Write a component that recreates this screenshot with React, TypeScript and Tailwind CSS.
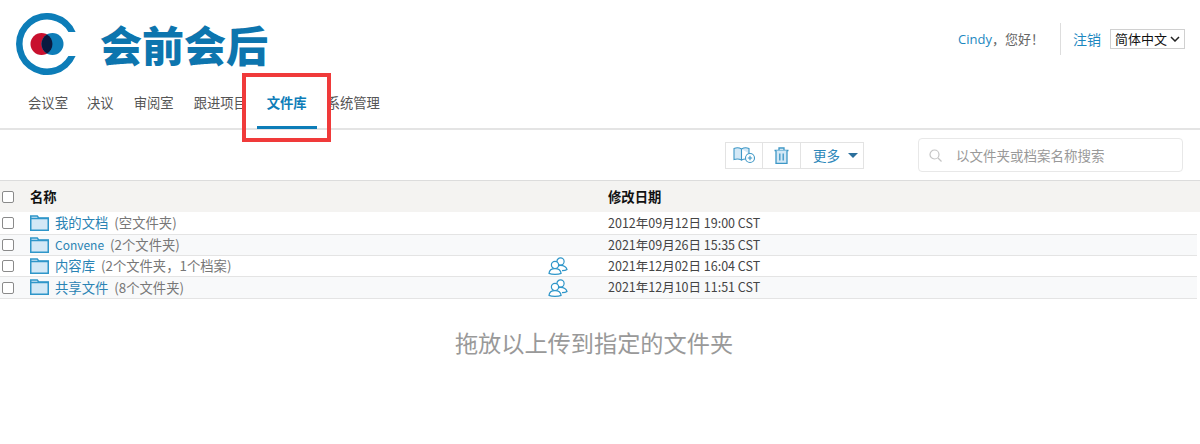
const fontStack = "font-['Noto_Sans_CJK_SC',sans-serif]";

const folders = [
  { name: "我的文档", nameSize: "text-[13.33px]", info: "(空文件夹)", date: "2012年09月12日 19:00 CST", shared: false, h: "h-[23px]" },
  { name: "Convene", nameSize: "text-[12px]", info: "(2个文件夹)", date: "2021年09月26日 15:35 CST", shared: false, h: "h-[21px]" },
  { name: "内容库", nameSize: "text-[13.33px]", info: "(2个文件夹，1个档案)", date: "2021年12月02日 16:04 CST", shared: true, h: "h-[21px]" },
  { name: "共享文件", nameSize: "text-[13.33px]", info: "(8个文件夹)", date: "2021年12月10日 11:51 CST", shared: true, h: "h-[22px]" },
];

function Logo() {
  return (
    <svg width="64" height="62" viewBox="0 0 64 62" className="shrink-0">
      <path d="M61.600 19A31 31 0 1 0 61.600 43H54.400A24.500 24.500 0 1 1 54.400 19z" fill="#0d7db8" />
      <circle cx="27.500" cy="31" r="11" fill="#c8102e" />
      <circle cx="38.500" cy="31" r="11" fill="#0d7db8" />
      <path d="M33 21.500a11 11 0 0 1 0 19a11 11 0 0 1 0-19z" fill="#0a1a3f" />
    </svg>
  );
}

function FolderIcon() {
  return (
    <svg width="19" height="16" viewBox="0 0 19 16" className="shrink-0">
      <path d="M.75 15.250V1h6.500l1.500 2h9.500v12.250z" fill="#d3e8f6" stroke="#2f96c9" strokeWidth="1.500" />
      <path d="M.75 3.500h18" stroke="#2f96c9" strokeWidth="1.500" />
    </svg>
  );
}

function SharedIcon() {
  return (
    <svg width="20" height="18" viewBox="0 0 20 18" fill="#fff" stroke="#2f96c9" strokeWidth="1.200">
      <circle cx="12.500" cy="4.500" r="3.600" />
      <path d="M8 12.500c.5-3 2.200-4.200 4.500-4.200s5.500 1 6.500 4.200c-1 .8-3 1.100-5 1.100" />
      <circle cx="7" cy="8" r="3.600" />
      <path d="M1 16.400c.3-3.200 3-4.800 6-4.800s5.700 1.600 6.100 4.800c-1.600.7-3.600.9-6.100.9s-4.400-.2-6-.9z" />
    </svg>
  );
}

function AddLibraryIcon() {
  return (
    <svg width="23" height="18" viewBox="0 0 23 18" fill="none" stroke="#3d97c6" strokeWidth="1.100">
      <path d="M1 2.500c2.500-1 5-1 7.500.5v11c-2.500-1.300-5-1.300-7.500-.5z" fill="#d3e8f6" />
      <path d="M8.500 3c2.500-1.500 5-1.500 7.500-.5v5" fill="#d3e8f6" />
      <path d="M8.500 14c1.500-.8 2.500-1 4-1" />
      <circle cx="17" cy="12" r="4.500" fill="#fff" />
      <path d="M17 9.800v4.400M14.800 12h4.400" />
    </svg>
  );
}

function TrashIcon() {
  return (
    <svg width="15" height="17" viewBox="0 0 15 17" fill="none" stroke="#3d97c6" strokeWidth="1.300">
      <path d="M.5 3.500h14M5 3.500V1h5v2.500" />
      <path d="M2 3.500v12.800h11V3.500" fill="#d3e8f6" />
      <path d="M5.800 6.500v7M9.200 6.500v7" />
    </svg>
  );
}

function SearchIcon() {
  return (
    <svg width="13" height="13" viewBox="0 0 13 13" fill="none" stroke="#c4c4c4" strokeWidth="1.200">
      <circle cx="5.500" cy="5.500" r="4.500" />
      <path d="M9 9l3.500 3.500" />
    </svg>
  );
}

function Check() {
  return <span className="block w-[12px] h-[12px] rounded-[2px] border border-[#8a8a8a] bg-white" />;
}

export default function App() {
  return (
    <div className={`relative w-[1200px] h-[444px] overflow-hidden bg-white ${fontStack}`}>
      <header className="h-[128px]">
        <div className="flex items-start h-[82px]">
          <div className="flex items-center pl-[14px] pt-[13px]">
            <Logo />
            <span className="ml-[22px] text-[42px] leading-[62px] font-black text-[#0d75ae]">
              会前会后
            </span>
          </div>
          <div className="ml-auto flex items-center pt-[23px] pr-[15px] text-[13px] leading-[32px]">
            <span className="text-[#1c87bf] font-['Open_Sans',sans-serif]">Cindy</span>
            <span className="text-[#666] mr-[16px]">，您好！</span>
            <span className="w-px h-[32px] bg-[#ddd] mr-[12px]" />
            <span className="text-[#1c87bf] text-[14px] mr-[9px]">注销</span>
            <span className="flex items-center justify-between w-[75px] h-[20px] px-[4px] border border-[#d0d0d0] text-[13px] leading-[18px] text-[#111]">
              简体中文
              <svg width="10" height="6" viewBox="0 0 10 6" fill="none" stroke="#222" strokeWidth="1.500">
                <path d="M1 1l4 4 4-4" />
              </svg>
            </span>
          </div>
        </div>
        <nav className="flex pl-[28px] text-[13.33px] text-[#555]">
          <span className="leading-[42px] mr-[19px]">会议室</span>
          <span className="leading-[42px] mr-[20px]">决议</span>
          <span className="leading-[42px] mr-[20px]">审阅室</span>
          <span className="leading-[42px] w-[63px]">跟进项目</span>
          <span className="h-[47px] w-[60px] text-center leading-[42px] font-bold text-[#0d7db8] border-b-[3px] border-[#0d7db8]">
            文件库
          </span>
          <span className="leading-[42px] ml-[10px]">系统管理</span>
        </nav>
      </header>

      <div className="h-[52px] border-t-2 border-[#e4e4e4] flex items-center justify-end pr-[17px]">
        <div className="flex h-[27px] mr-[54px] border border-[#e3e3e3]">
          <span className="w-[37px] flex items-center justify-center border-r border-[#e3e3e3]">
            <AddLibraryIcon />
          </span>
          <span className="w-[38px] flex items-center justify-center border-r border-[#e3e3e3]">
            <TrashIcon />
          </span>
          <span className="w-[62px] flex items-center pl-[12px] gap-[8px] text-[13.5px] text-[#2b87b9]">
            更多
            <span className="w-0 h-0 border-x-[5px] border-x-transparent border-t-[5px] border-t-[#2b6f9c]" />
          </span>
        </div>
        <div className="flex items-center w-[265px] h-[34px] border border-[#e8e8e8] rounded-[4px] pl-[10px]">
          <SearchIcon />
          <span className="ml-[14px] text-[13.5px] text-[#999]">以文件夹或档案名称搜索</span>
        </div>
      </div>

      <div className="w-[1197px]">
        <div className="flex items-center h-[32px] w-[1200px] bg-[#f4f3f1] border-t border-[#dcdcdc] text-[13.33px] font-bold text-[#111]">
          <span className="w-[30px] pl-[2px]"><Check /></span>
          <span className="w-[578px]">名称</span>
          <span>修改日期</span>
        </div>
        {folders.map((f, i) => (
          <div
            key={f.name}
            className={`flex items-center ${f.h} border-b border-[#e4e4e4] text-[13.33px] ${i % 2 === 1 ? "bg-[#f8f9fa]" : "bg-white"}`}
          >
            <span className="w-[30px] pl-[2px]"><Check /></span>
            <span className="w-[518px] flex items-center">
              <FolderIcon />
              <span className={`ml-[6px] text-[#2a83b4] ${f.nameSize}`}>{f.name}</span>
              <span className="ml-[6px] text-[#777]">{f.info}</span>
            </span>
            <span className="w-[60px]">{f.shared && <SharedIcon />}</span>
            <span className="text-[12.5px] text-[#444]">{f.date}</span>
          </div>
        ))}
      </div>

      <p className="mt-[26px] text-center text-[23.2px] leading-[34px] text-[#999] pr-[12px]">
        拖放以上传到指定的文件夹
      </p>

      <div className="absolute left-[242px] top-[73px] w-[89px] h-[69px] border-[4px] border-[#f03a3a]" />
    </div>
  );
}
